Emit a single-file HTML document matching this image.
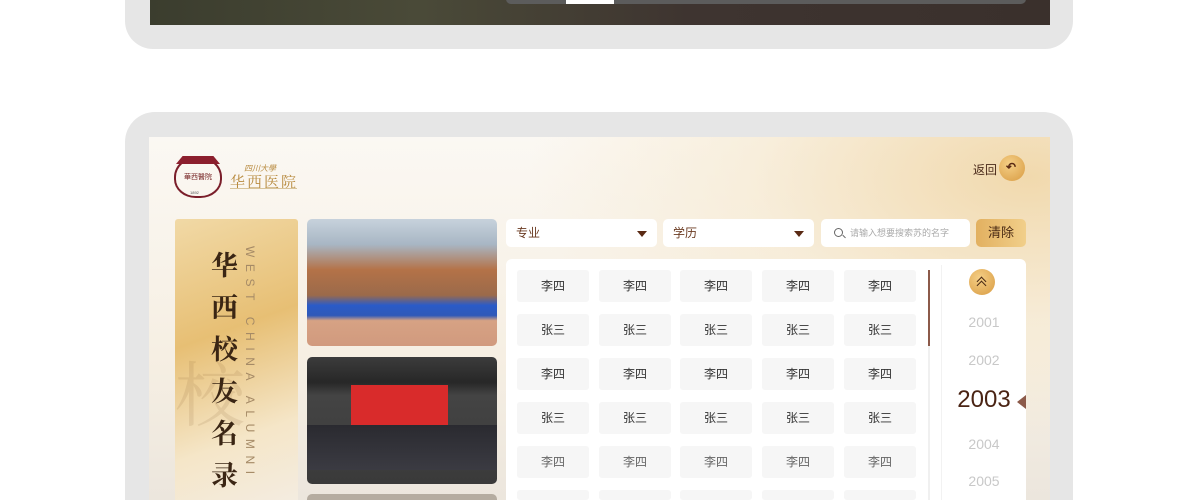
<!DOCTYPE html>
<html><head><meta charset="utf-8"><style>
*{margin:0;padding:0;box-sizing:border-box}
html,body{width:1200px;height:500px;overflow:hidden}
body{background:#fff;position:relative;font-family:"Liberation Sans","Noto Sans CJK SC",sans-serif}
#w{position:absolute;left:0;top:0;width:1200px;height:500px;overflow:hidden}
.a{position:absolute}
.cell{position:absolute;width:72px;height:32px;background:#f6f6f6;border-radius:3px;font-size:12px;color:#333;text-align:center;line-height:32px}
.dd{position:absolute;height:28px;background:#fff;border-radius:5px;font-size:12px;color:#6b3b22;line-height:28px;padding-left:10px}
.tri{position:absolute;right:10px;top:12px;width:0;height:0;border-left:5px solid transparent;border-right:5px solid transparent;border-top:6px solid #5a2a14}
.yr{position:absolute;width:86px;text-align:center;color:#c8c8c8;font-size:14px}
</style></head><body><div id="w">
<div class="a" style="left:125px;top:-30px;width:948px;height:79px;background:#e6e6e6;border-radius:28px"></div>
<div class="a" style="left:150px;top:0;width:900px;height:25px;background:linear-gradient(90deg,#3b3d2e,#4a4a38 30%,#3e3430 60%,#3a302c)"></div>
<div class="a" style="left:506px;top:-6px;width:520px;height:10px;background:#5c5c5c;border-radius:5px"></div>
<div class="a" style="left:566px;top:0;width:48px;height:4px;background:#fff"></div>

<div class="a" style="left:125px;top:112px;width:948px;height:388px;background:#e6e6e6;border-radius:30px 30px 0 0"></div>
<div class="a" style="left:149px;top:137px;width:901px;height:363px;overflow:hidden;background:radial-gradient(ellipse 500px 260px at 880px 40px,#f1d9ad,rgba(246,232,205,0.6) 55%,rgba(250,245,236,0) 100%),linear-gradient(180deg,#fbf8f3,#f6efe3 60%,#ece6dd)"></div>
<!-- logo -->
<div class="a" style="left:174px;top:156px;width:48px;height:42px;border:2px solid #7a1e2a;border-radius:50% 50% 45% 45%;border-top-color:transparent"></div>
<div class="a" style="left:176px;top:156px;width:44px;height:8px;background:#8c1f2e;clip-path:polygon(0 100%,15% 0,85% 0,100% 100%)"></div>
<div class="a" style="left:183px;top:174px;width:30px;height:8px;font-size:7px;color:#7a2a2a;text-align:center;line-height:8px">華西醫院</div>
<div class="a" style="left:190px;top:190px;width:16px;height:5px;font-size:4px;color:#555">1892</div>
<div class="a" style="left:244px;top:163px;font-size:8px;color:#b7893c;font-style:italic">四川大學</div>
<div class="a" style="left:230px;top:171px;font-size:15px;color:#b7893c;letter-spacing:2px;font-family:'Noto Serif CJK SC',serif">华西医院</div>
<div class="a" style="left:230px;top:188px;width:67px;height:1px;background:#d8c49a"></div>
<!-- back -->
<div class="a" style="left:973px;top:161px;font-size:12px;color:#4a2a1a">返回</div>
<div class="a" style="left:999px;top:155px;width:26px;height:26px;border-radius:50%;background:radial-gradient(circle at 40% 35%,#f5cf86,#d89b42)"></div>
<div class="a" style="left:1006px;top:160px;font-size:12px;color:#5a2a14;font-weight:bold">↶</div>
<!-- left panel -->
<div class="a" style="left:175px;top:219px;width:123px;height:281px;border-radius:3px 3px 0 0;background:linear-gradient(160deg,#f1d9a6,#e7bf74 40%,#f5e6c8 75%,#f4ece0)"></div>
<div class="a" style="left:175px;top:340px;font-size:70px;color:rgba(120,80,40,0.12);font-family:'Noto Serif CJK SC',serif">校</div>
<div class="a" style="left:211px;top:243px;width:30px;font-size:27px;line-height:42px;color:#3b2614;font-weight:bold;font-family:'Noto Serif CJK SC',serif">华西校友名录</div>
<div class="a" style="left:243px;top:246px;writing-mode:vertical-rl;font-size:12px;letter-spacing:6.6px;color:#a58a66;white-space:nowrap">WEST CHINA ALUMNI</div>
<!-- photos -->
<div class="a" style="left:307px;top:219px;width:190px;height:127px;border-radius:5px;overflow:hidden;background:linear-gradient(180deg,#c7d2dc 0%,#a8b6c4 20%,#b47248 40%,#9b6a4a 60%,#2a5bc8 68%,#2f59b8 76%,#d6a284 80%,#d19a7e 100%)"></div>
<div class="a" style="left:307px;top:357px;width:190px;height:127px;border-radius:5px;overflow:hidden;background:linear-gradient(180deg,#3c3c3c 0%,#272727 20%,#444 30%,#3a3a3a 100%)">
<div class="a" style="left:44px;top:28px;width:97px;height:40px;background:#d92b2b"></div>
<div class="a" style="left:0;top:68px;width:190px;height:45px;background:linear-gradient(180deg,#2a2a30,#3b3b42)"></div>
</div>
<div class="a" style="left:307px;top:494px;width:190px;height:6px;border-radius:5px 5px 0 0;background:#b5aca0"></div>
<!-- filters -->
<div class="dd" style="left:506px;top:219px;width:151px">专业<div class="tri"></div></div>
<div class="dd" style="left:663px;top:219px;width:151px">学历<div class="tri"></div></div>
<div class="dd" style="left:821px;top:219px;width:149px;font-size:9px;color:#aaa;padding-left:29px">请输入想要搜索苏的名字</div>
<div class="a" style="left:834px;top:228px;width:9px;height:9px;border:1.3px solid #666;border-radius:50%"></div>
<div class="a" style="left:842px;top:236px;width:4px;height:1.3px;background:#666;transform:rotate(45deg)"></div>
<div class="a" style="left:976px;top:219px;width:50px;height:28px;border-radius:5px;background:linear-gradient(90deg,#e2b060,#f1cf8a);font-size:13px;color:#4a2a14;text-align:center;line-height:28px">清除</div>
<!-- main panel -->
<div class="a" style="left:506px;top:259px;width:520px;height:241px;background:#fff;border-radius:6px 6px 0 0"></div>
<div class="a" style="left:928px;top:270px;width:2px;height:230px;background:#f0f0f0"></div>
<div class="a" style="left:928px;top:270px;width:2px;height:76px;background:#8c5a4a"></div>
<div class="a" style="left:941px;top:265px;width:1px;height:235px;background:#f2f2f2"></div>
<div class="a" style="left:969px;top:269px;width:26px;height:26px;border-radius:50%;background:radial-gradient(circle at 40% 35%,#f5cf86,#d89b42)"></div>
<div class="a" style="left:978px;top:278px;width:7px;height:7px;border-left:1.5px solid #4a2a14;border-top:1.5px solid #4a2a14;transform:rotate(45deg)"></div>
<div class="a" style="left:978px;top:282px;width:7px;height:7px;border-left:1.5px solid #4a2a14;border-top:1.5px solid #4a2a14;transform:rotate(45deg)"></div>
<div class="yr" style="top:314px;left:941px">2001</div>
<div class="yr" style="top:352px;left:941px">2002</div>
<div class="yr" style="top:386px;left:941px;font-size:24px;color:#4a2414">2003</div>
<div class="a" style="left:1017px;top:395px;width:0;height:0;border-top:7px solid transparent;border-bottom:7px solid transparent;border-right:9px solid #8c5a4a"></div>
<div class="yr" style="top:436px;left:941px">2004</div>
<div class="yr" style="top:473px;left:941px">2005</div>
<div class="cell" style="left:517px;top:270px">李四</div><div class="cell" style="left:599px;top:270px">李四</div><div class="cell" style="left:680px;top:270px">李四</div><div class="cell" style="left:762px;top:270px">李四</div><div class="cell" style="left:844px;top:270px">李四</div>
<div class="cell" style="left:517px;top:314px">张三</div><div class="cell" style="left:599px;top:314px">张三</div><div class="cell" style="left:680px;top:314px">张三</div><div class="cell" style="left:762px;top:314px">张三</div><div class="cell" style="left:844px;top:314px">张三</div>
<div class="cell" style="left:517px;top:358px">李四</div><div class="cell" style="left:599px;top:358px">李四</div><div class="cell" style="left:680px;top:358px">李四</div><div class="cell" style="left:762px;top:358px">李四</div><div class="cell" style="left:844px;top:358px">李四</div>
<div class="cell" style="left:517px;top:402px">张三</div><div class="cell" style="left:599px;top:402px">张三</div><div class="cell" style="left:680px;top:402px">张三</div><div class="cell" style="left:762px;top:402px">张三</div><div class="cell" style="left:844px;top:402px">张三</div>
<div class="cell" style="left:517px;top:446px;color:#666">李四</div><div class="cell" style="left:599px;top:446px;color:#666">李四</div><div class="cell" style="left:680px;top:446px;color:#666">李四</div><div class="cell" style="left:762px;top:446px;color:#666">李四</div><div class="cell" style="left:844px;top:446px;color:#666">李四</div>
<div class="cell" style="left:517px;top:490px;height:10px"></div><div class="cell" style="left:599px;top:490px;height:10px"></div><div class="cell" style="left:680px;top:490px;height:10px"></div><div class="cell" style="left:762px;top:490px;height:10px"></div><div class="cell" style="left:844px;top:490px;height:10px"></div>
</div></body></html>
